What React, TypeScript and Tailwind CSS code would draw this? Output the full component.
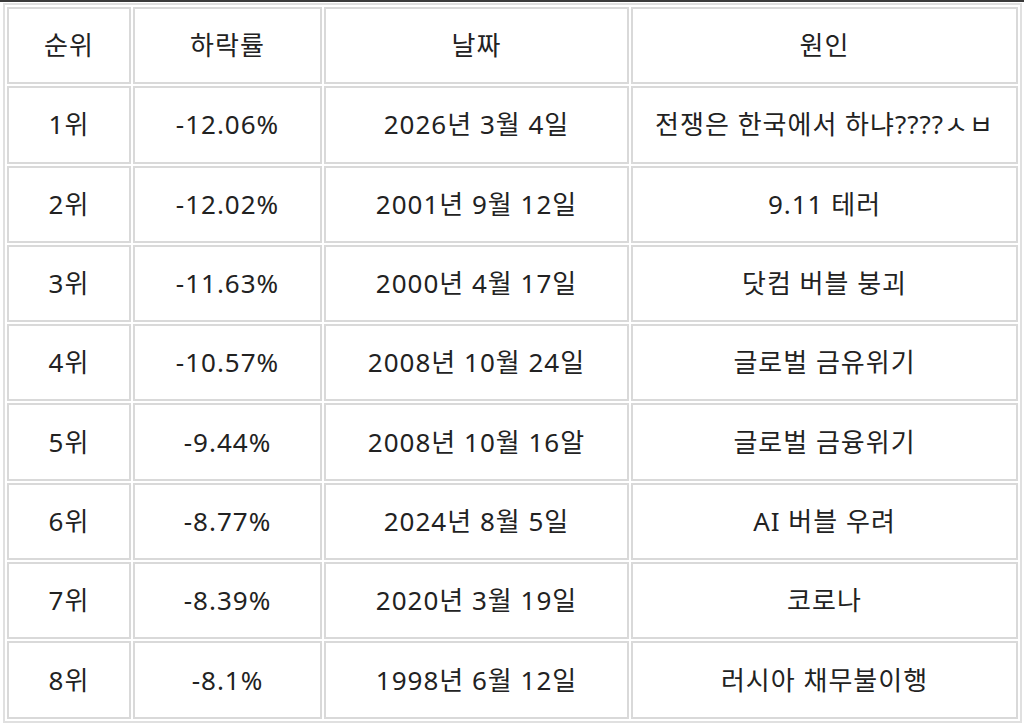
import React from "react";

const rows = [
  ["1위", "-12.06%", "2026년 3월 4일", "전쟁은 한국에서 하냐????ㅅㅂ"],
  ["2위", "-12.02%", "2001년 9월 12일", "9.11 테러"],
  ["3위", "-11.63%", "2000년 4월 17일", "닷컴 버블 붕괴"],
  ["4위", "-10.57%", "2008년 10월 24일", "글로벌 금유위기"],
  ["5위", "-9.44%", "2008년 10월 16알", "글로벌 금융위기"],
  ["6위", "-8.77%", "2024년 8월 5일", "AI 버블 우려"],
  ["7위", "-8.39%", "2020년 3월 19일", "코로나"],
  ["8위", "-8.1%", "1998년 6월 12일", "러시아 채무불이행"],
];

const cell =
  "border-2 border-[#d9d9d9] text-center align-middle p-0 font-normal";

export default function App() {
  return (
    <div
      className="w-[1024px] h-[723px] bg-white border-t-2 border-[#3a3a3a] overflow-hidden text-[#222] text-[26px] tracking-[1px]"
      style={{ fontFamily: '"Noto Sans", "Noto Sans CJK KR", sans-serif' }}
    >
      <table className="ml-[3px] mt-px border-2 border-[#e0e0e0] border-separate border-spacing-[2px]">
        <thead>
          <tr className="h-[77.3px]">
            <th className={`${cell} w-[124px]`}>순위</th>
            <th className={`${cell} w-[189px]`}>하락률</th>
            <th className={`${cell} w-[305px]`}>날짜</th>
            <th className={`${cell} w-[387px]`}>원인</th>
          </tr>
        </thead>
        <tbody>
          {rows.map((r) => (
            <tr key={r[0]} className="h-[77.3px]">
              {r.map((v, i) => (
                <td key={i} className={cell}>
                  {v}
                </td>
              ))}
            </tr>
          ))}
        </tbody>
      </table>
    </div>
  );
}
